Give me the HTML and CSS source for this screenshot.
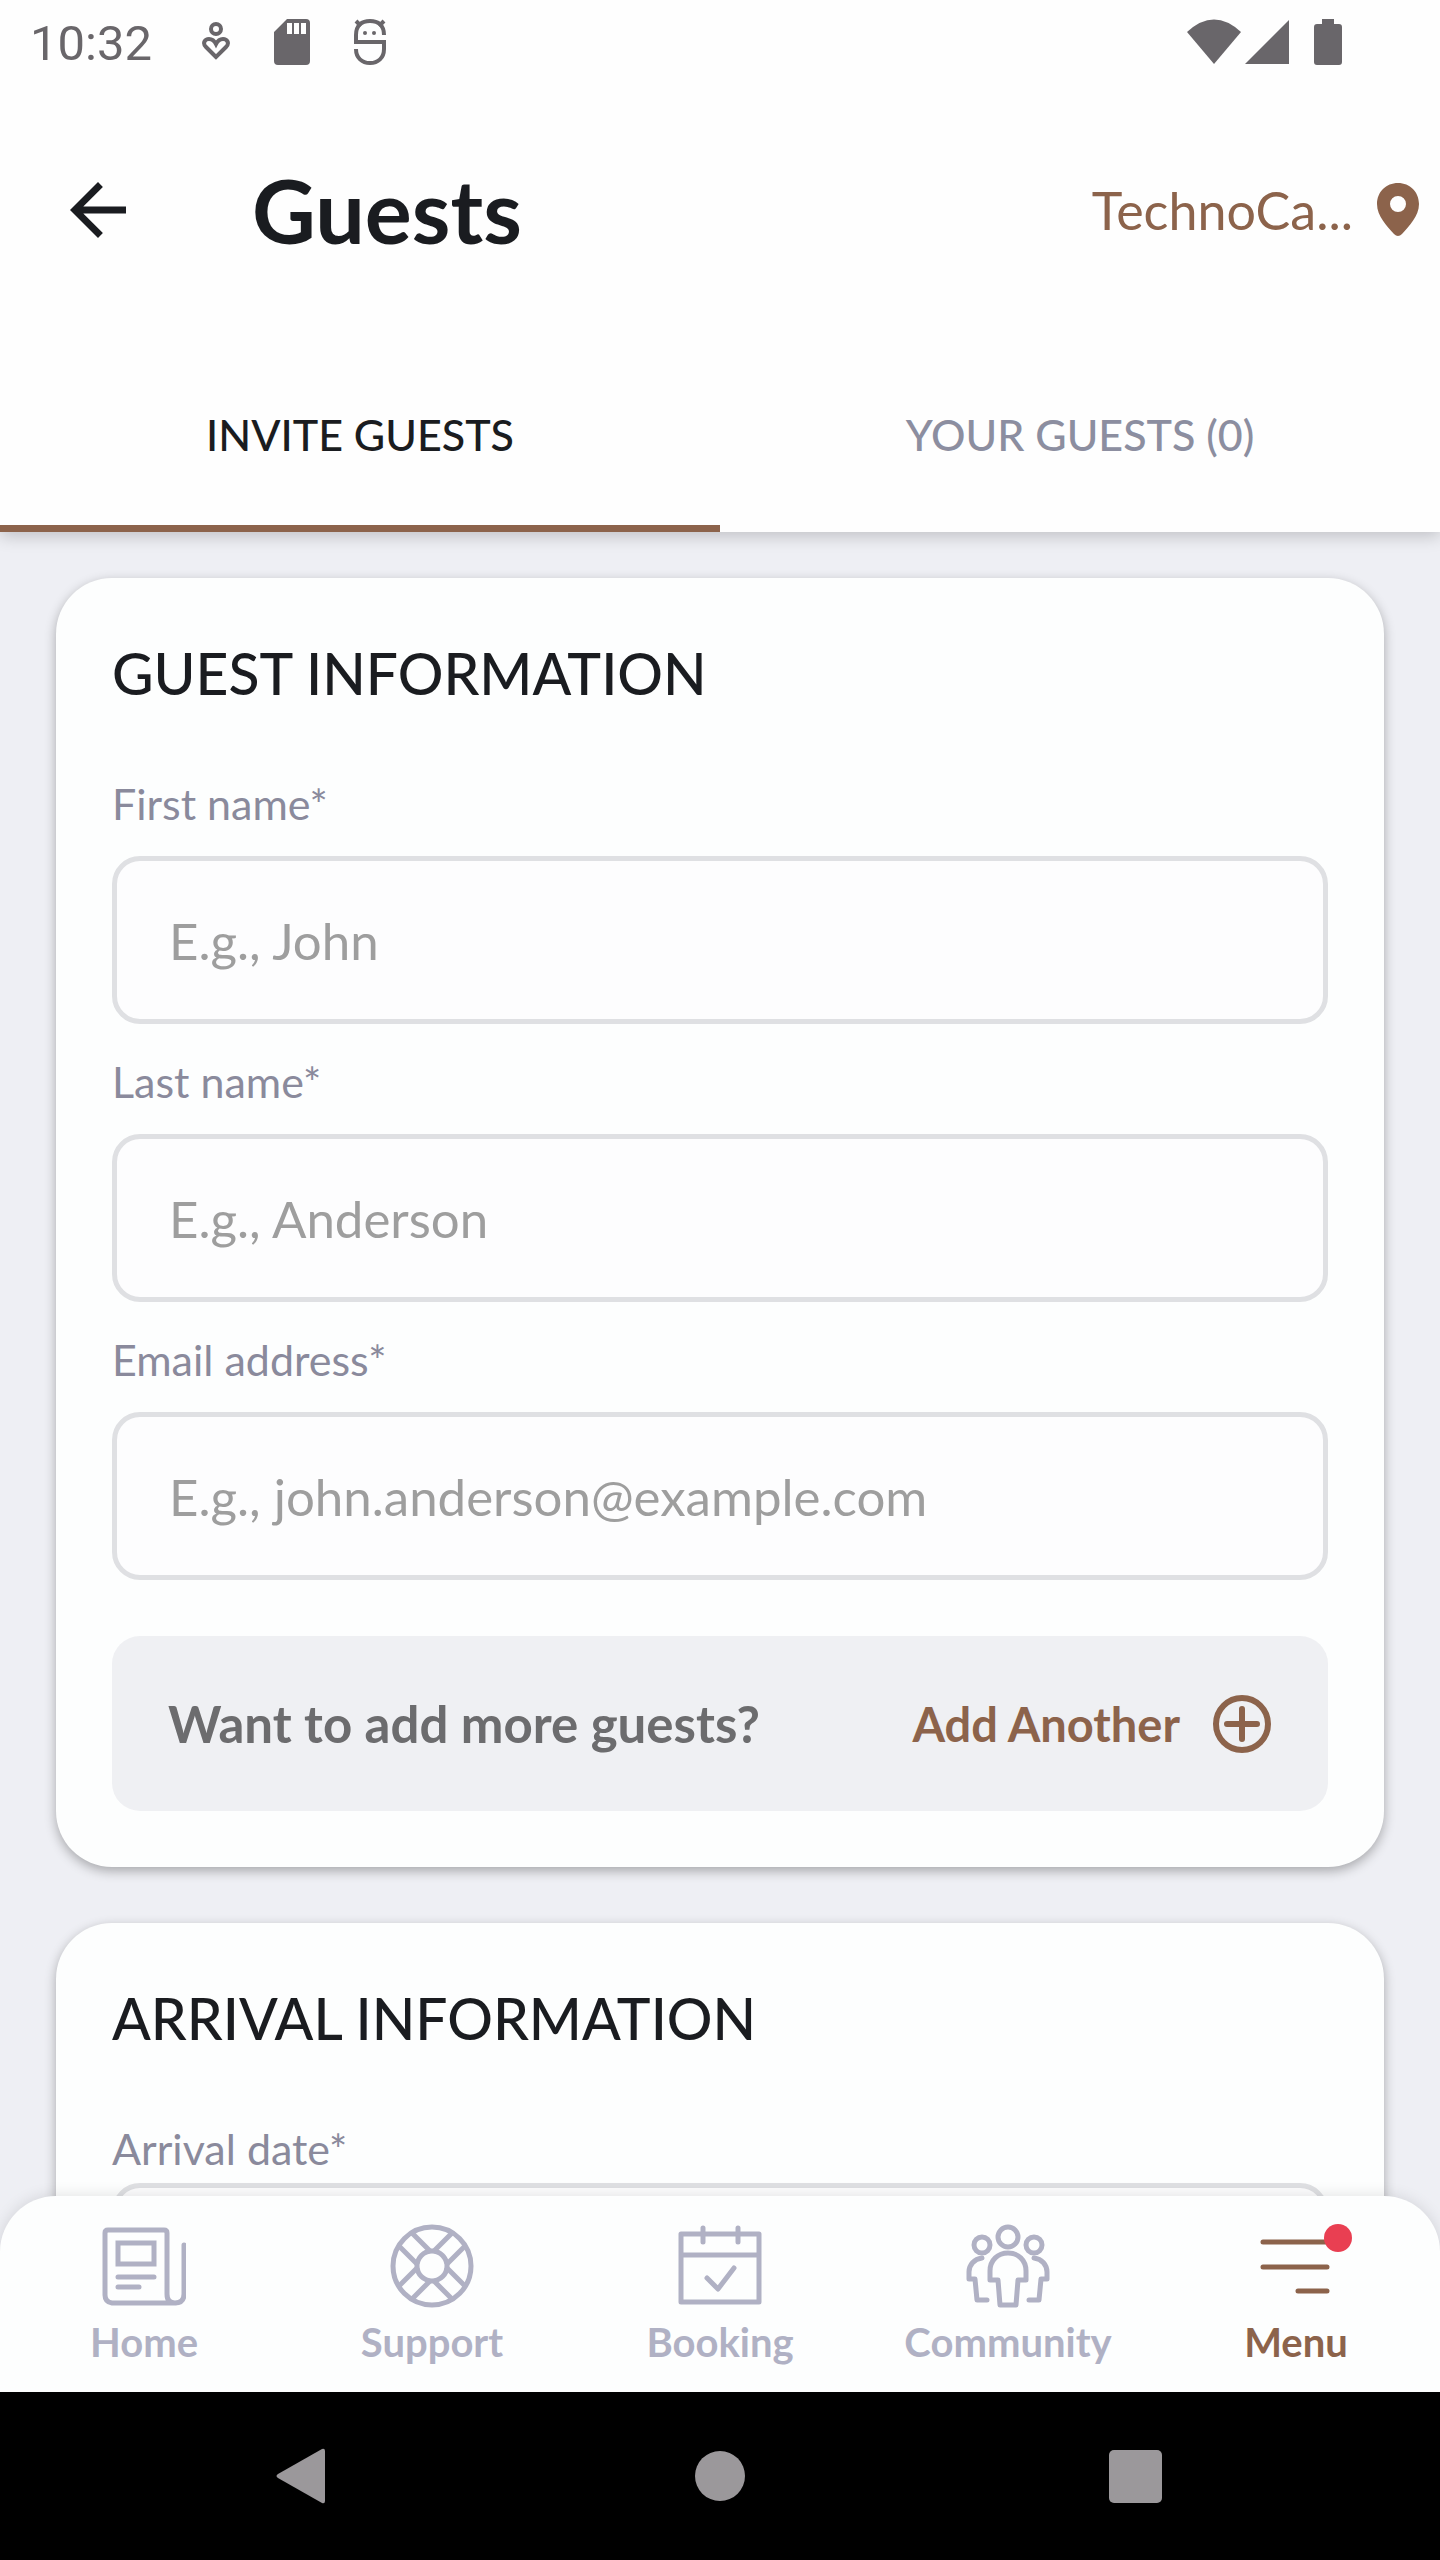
FILE: index.html
```html
<!DOCTYPE html>
<html lang="en">
<head>
    <meta charset="UTF-8">
    <meta name="viewport" content="width=device-width, initial-scale=1.0">
    <title>Guests</title>
    <link rel="stylesheet" href="styles.css">
</head>
<body>
    <div class="app">
        <div class="status-bar">
            <span class="clock">10:32</span>
            <div class="status-left">
                <svg width="28" height="46" viewBox="0 0 28 46" fill="none" stroke="currentColor" stroke-width="4">
                    <circle cx="14" cy="10" r="5"/>
                    <path d="M14 38 L4 28 C0 24 3 20 7 20 C11 20 13 23 14 25 C15 23 17 20 21 20 C25 20 28 24 24 28 Z"/>
                </svg>
                <svg width="36" height="46" viewBox="0 0 36 46" fill="currentColor" fill-rule="evenodd">
                    <path d="M13 0 H32 a4 4 0 0 1 4 4 V42 a4 4 0 0 1 -4 4 H4 a4 4 0 0 1 -4 -4 V13 Z M13 4 V15 H18 V4 Z M20 4 V15 H25 V4 Z M27 4 V15 H32 V4 Z"/>
                </svg>
                <svg width="32" height="46" viewBox="0 0 32 46" fill="none" stroke="currentColor" stroke-width="4">
                    <path d="M30 16 C30 6 24 2 16 2 C8 2 2 6 2 16 V23 H30 V30 C30 39 24 44 16 44 C8 44 2 39 2 30"/>
                    <path d="M2 2 L7 7 M30 2 L25 7"/>
                    <circle cx="11" cy="14" r="2" fill="currentColor" stroke="none"/>
                    <circle cx="20" cy="14" r="2" fill="currentColor" stroke="none"/>
                </svg>
            </div>
            <div class="status-right">
                <svg width="54" height="46" viewBox="0 0 54 46" fill="currentColor"><path d="M0 13 Q27 -12 54 13 L27 45 Z"/></svg>
                <svg width="44" height="46" viewBox="0 0 44 46" fill="currentColor"><path d="M44 1 V45 H0 Z"/></svg>
                <svg class="battery" width="28" height="46" viewBox="0 0 28 46" fill="currentColor"><path d="M8 0 H20 V5 H25 a3 3 0 0 1 3 3 V43 a3 3 0 0 1 -3 3 H3 a3 3 0 0 1 -3 -3 V8 a3 3 0 0 1 3 -3 H8 Z"/></svg>
            </div>
        </div>

        <header class="header">
            <button type="button" class="back" aria-label="Back">
                <svg width="84" height="84" viewBox="0 0 24 24" fill="currentColor"><path d="M20 11 H7.8 l5.6 -5.6 L12 4 l-8 8 8 8 1.4 -1.4 L7.8 13 H20 Z"/></svg>
            </button>
            <h1>Guests</h1>
            <button type="button" class="location">
                TechnoCa...
                <svg width="42" height="54" viewBox="0 0 42 54" fill="currentColor" fill-rule="evenodd">
                    <path d="M21 0 C9 0 0 9 0 21 C0 33 10 43 17 51 Q21 55 25 51 C32 43 42 33 42 21 C42 9 33 0 21 0 Z M21 13 a8 8 0 1 1 0 16 a8 8 0 1 1 0 -16 Z"/>
                </svg>
            </button>
        </header>

        <nav class="tabs">
            <button type="button" class="tab active">INVITE GUESTS</button>
            <button type="button" class="tab">YOUR GUESTS (0)</button>
        </nav>

        <main class="content">
            <form class="card">
                <h2>GUEST INFORMATION</h2>
                <div class="fields">
                    <div class="field">
                        <label for="firstName">First name*</label>
                        <input type="text" id="firstName" name="firstName" placeholder="E.g., John">
                    </div>
                    <div class="field">
                        <label for="lastName">Last name*</label>
                        <input type="text" id="lastName" name="lastName" placeholder="E.g., Anderson">
                    </div>
                    <div class="field">
                        <label for="email">Email address*</label>
                        <input type="email" id="email" name="email" placeholder="E.g., john.anderson@example.com">
                    </div>
                </div>
                <div class="add-more">
                    <span>Want to add more guests?</span>
                    <button type="button" class="add-btn">
                        Add Another
                        <svg width="60" height="60" viewBox="0 0 60 60" fill="none" stroke="currentColor" stroke-width="6" stroke-linecap="round">
                            <circle cx="30" cy="30" r="26"/>
                            <path d="M30 15 V45 M15 30 H45"/>
                        </svg>
                    </button>
                </div>
            </form>

            <form class="card">
                <h2>ARRIVAL INFORMATION</h2>
                <div class="field date-field">
                    <label for="arrivalDate">Arrival date*</label>
                    <input type="text" id="arrivalDate" name="arrivalDate">
                </div>
            </form>
        </main>

        <nav class="bottom-nav">
            <a href="#" class="nav-item">
                <svg width="84" height="84" viewBox="0 0 84 84" fill="none" stroke="currentColor" stroke-width="5" stroke-linecap="round">
                    <path d="M74 79 H10 Q3 78 3 71 V9 Q3 6 6 6 H62 Q65 6 65 9 V70 Q65 79 73 79 Q82 79 82 70 V21"/>
                    <path d="M16 19 H52 V40 H16 Z M16 53 H52 M16 63 H37"/>
                </svg>
                <span>Home</span>
            </a>
            <a href="#" class="nav-item">
                <svg width="84" height="84" viewBox="0 0 84 84" fill="none" stroke="currentColor" stroke-width="5">
                    <circle cx="42" cy="42" r="39"/>
                    <circle cx="42" cy="42" r="15"/>
                    <path d="M22 9 L41 28 M62 9 L43 28 M75 22 L56 41 M75 62 L56 43 M62 75 L43 56 M22 75 L41 56 M9 62 L28 43 M9 22 L28 41"/>
                </svg>
                <span>Support</span>
            </a>
            <a href="#" class="nav-item">
                <svg width="84" height="84" viewBox="0 0 84 84" fill="none" stroke="currentColor" stroke-width="5" stroke-linecap="round" stroke-linejoin="round">
                    <path d="M3 10 H81 V78 H3 Z M3 31 H81 M25 4 V18 M60 4 V18 M29 54 L40 65 L56 44"/>
                </svg>
                <span>Booking</span>
            </a>
            <a href="#" class="nav-item">
                <svg width="84" height="84" viewBox="0 0 84 84" fill="none" stroke="currentColor" stroke-width="5" stroke-linecap="round" stroke-linejoin="round">
                    <circle cx="42" cy="13" r="10"/>
                    <circle cx="16" cy="21" r="8"/>
                    <circle cx="68" cy="21" r="8"/>
                    <path d="M34 81 L32 56 H24 V47 C24 36 32 29 42 29 C52 29 60 36 60 47 V56 H52 L50 81 Z"/>
                    <path d="M16 34 C8 35 3 41 3 48 V55 H9 L11 76 H21 M68 34 C76 35 81 41 81 48 V55 H75 L73 76 H63"/>
                </svg>
                <span>Community</span>
            </a>
            <a href="#" class="nav-item active">
                <span class="icon-wrap">
                    <svg width="84" height="84" viewBox="0 0 84 84" fill="none" stroke="currentColor" stroke-width="5" stroke-linecap="round">
                        <path d="M9 18 H73 M9 43 H73 M44 67 H73"/>
                    </svg>
                    <span class="dot"></span>
                </span>
                <span>Menu</span>
            </a>
        </nav>

        <div class="system-nav">
            <button type="button" aria-label="Back">
                <svg width="56" height="56" viewBox="0 0 56 56" fill="currentColor"><path d="M2 26 L46 1 Q49 0 49 3 V53 Q49 56 46 55 L2 30 Q-1 28 2 26 Z"/></svg>
            </button>
            <button type="button" aria-label="Home">
                <svg width="56" height="56" viewBox="0 0 56 56" fill="currentColor"><circle cx="28" cy="28" r="25"/></svg>
            </button>
            <button type="button" aria-label="Recent apps">
                <svg width="56" height="56" viewBox="0 0 56 56" fill="currentColor"><rect x="1" y="2" width="53" height="53" rx="5"/></svg>
            </button>
        </div>
    </div>
</body>
</html>
```

FILE: styles.css
```css
* {
    box-sizing: border-box;
}
body {
    font-family: Lato, sans-serif;
    background-color: #eeeff4;
    color: #1a1c20;
    margin: 0;
}
h1, h2 {
    margin: 0;
}
button {
    background: none;
    border: none;
    padding: 0;
    font-family: inherit;
    color: inherit;
    cursor: pointer;
}
svg {
    display: block;
    flex-shrink: 0;
}
.app {
    display: flex;
    flex-direction: column;
    height: 100vh;
}

/* status bar */
.status-bar {
    display: flex;
    align-items: center;
    height: 84px;
    padding: 0 98px 0 30px;
    background-color: #fefefe;
    color: #69666a;
    flex-shrink: 0;
}
.clock {
    padding-top: 4px;
    font-family: Roboto, sans-serif;
    font-size: 49px;
    line-height: 80px;
}
.status-left {
    display: flex;
    gap: 44px;
    margin-left: 50px;
}
.status-right {
    display: flex;
    gap: 4px;
    margin-left: auto;
}
.battery {
    margin-left: 21px;
}

/* header */
.header {
    position: relative;
    display: flex;
    align-items: center;
    height: 252px;
    padding: 0 21px 0 56px;
    background-color: #fefefe;
    flex-shrink: 0;
    z-index: 2;
}
.header h1 {
    font-size: 88px;
    line-height: 104px;
    margin-left: 112px;
}
.location {
    display: flex;
    align-items: center;
    gap: 24px;
    margin-left: auto;
    font-size: 52px;
    line-height: 60px;
    color: #8c634b;
}

/* tabs */
.tabs {
    display: flex;
    height: 196px;
    background-color: #fefefe;
    box-shadow: 0 4px 16px rgba(0, 0, 0, 0.2);
    flex-shrink: 0;
    z-index: 1;
}
.tab {
    flex: 1;
    padding-top: 7px;
    border-bottom: 7px solid transparent;
    font-size: 43px;
    font-weight: 500;
    color: #8c8ea0;
}
.tab.active {
    color: #1a1c20;
    border-bottom-color: #8c634b;
}

/* cards */
.content {
    flex: 1;
    min-height: 0;
    overflow: hidden;
    padding: 46px 56px 0;
}
.card {
    padding: 56px;
    margin-bottom: 56px;
    background-color: #fdfefe;
    border-radius: 56px;
    box-shadow: 0 4px 12px rgba(0, 0, 0, 0.3);
}
.card h2 {
    font-size: 57px;
    font-weight: 500;
    line-height: 78px;
    margin-bottom: 64px;
}
.fields {
    display: grid;
    gap: 30px;
}
.field {
    display: flex;
    flex-direction: column;
    gap: 24px;
}
.field label {
    font-size: 43px;
    line-height: 56px;
    color: #8a8a9c;
}
.field input {
    width: 100%;
    height: 168px;
    padding: 0 52px;
    border: 5px solid #dfe0e3;
    border-radius: 28px;
    background-color: #fdfdfe;
    font-family: inherit;
    font-size: 51px;
}
.field input::placeholder {
    color: #9e9e9e;
}
.date-field {
    gap: 6px;
}
.add-more {
    display: flex;
    align-items: center;
    justify-content: space-between;
    height: 175px;
    margin-top: 56px;
    padding: 0 56px;
    border-radius: 28px;
    background-color: #eff0f3;
    font-size: 51px;
    font-weight: bold;
    color: #6c6c6e;
}
.add-btn {
    display: flex;
    align-items: center;
    gap: 32px;
    font-size: 47px;
    font-weight: bold;
    color: #8c634b;
}

/* bottom navigation */
.bottom-nav {
    display: flex;
    height: 196px;
    margin-top: -56px;
    padding-top: 28px;
    border-radius: 56px 56px 0 0;
    background-color: #fdfefe;
    box-shadow: 0 0 16px rgba(0, 0, 0, 0.12);
    flex-shrink: 0;
    z-index: 1;
}
.nav-item {
    flex: 1;
    display: flex;
    flex-direction: column;
    align-items: center;
    gap: 10px;
    font-size: 40px;
    font-weight: bold;
    line-height: 48px;
    color: #b0b1c4;
    text-decoration: none;
}
.nav-item.active {
    color: #8c634b;
}
.icon-wrap {
    position: relative;
}
.dot {
    position: absolute;
    top: 0;
    right: -14px;
    width: 28px;
    height: 28px;
    border-radius: 50%;
    background-color: #e93f52;
}

/* android buttons */
.system-nav {
    display: grid;
    grid-template-columns: repeat(3, 1fr);
    justify-items: center;
    align-items: center;
    height: 168px;
    padding: 0 96px;
    background-color: #000;
    color: #9b989b;
    flex-shrink: 0;
    z-index: 1;
}
```
